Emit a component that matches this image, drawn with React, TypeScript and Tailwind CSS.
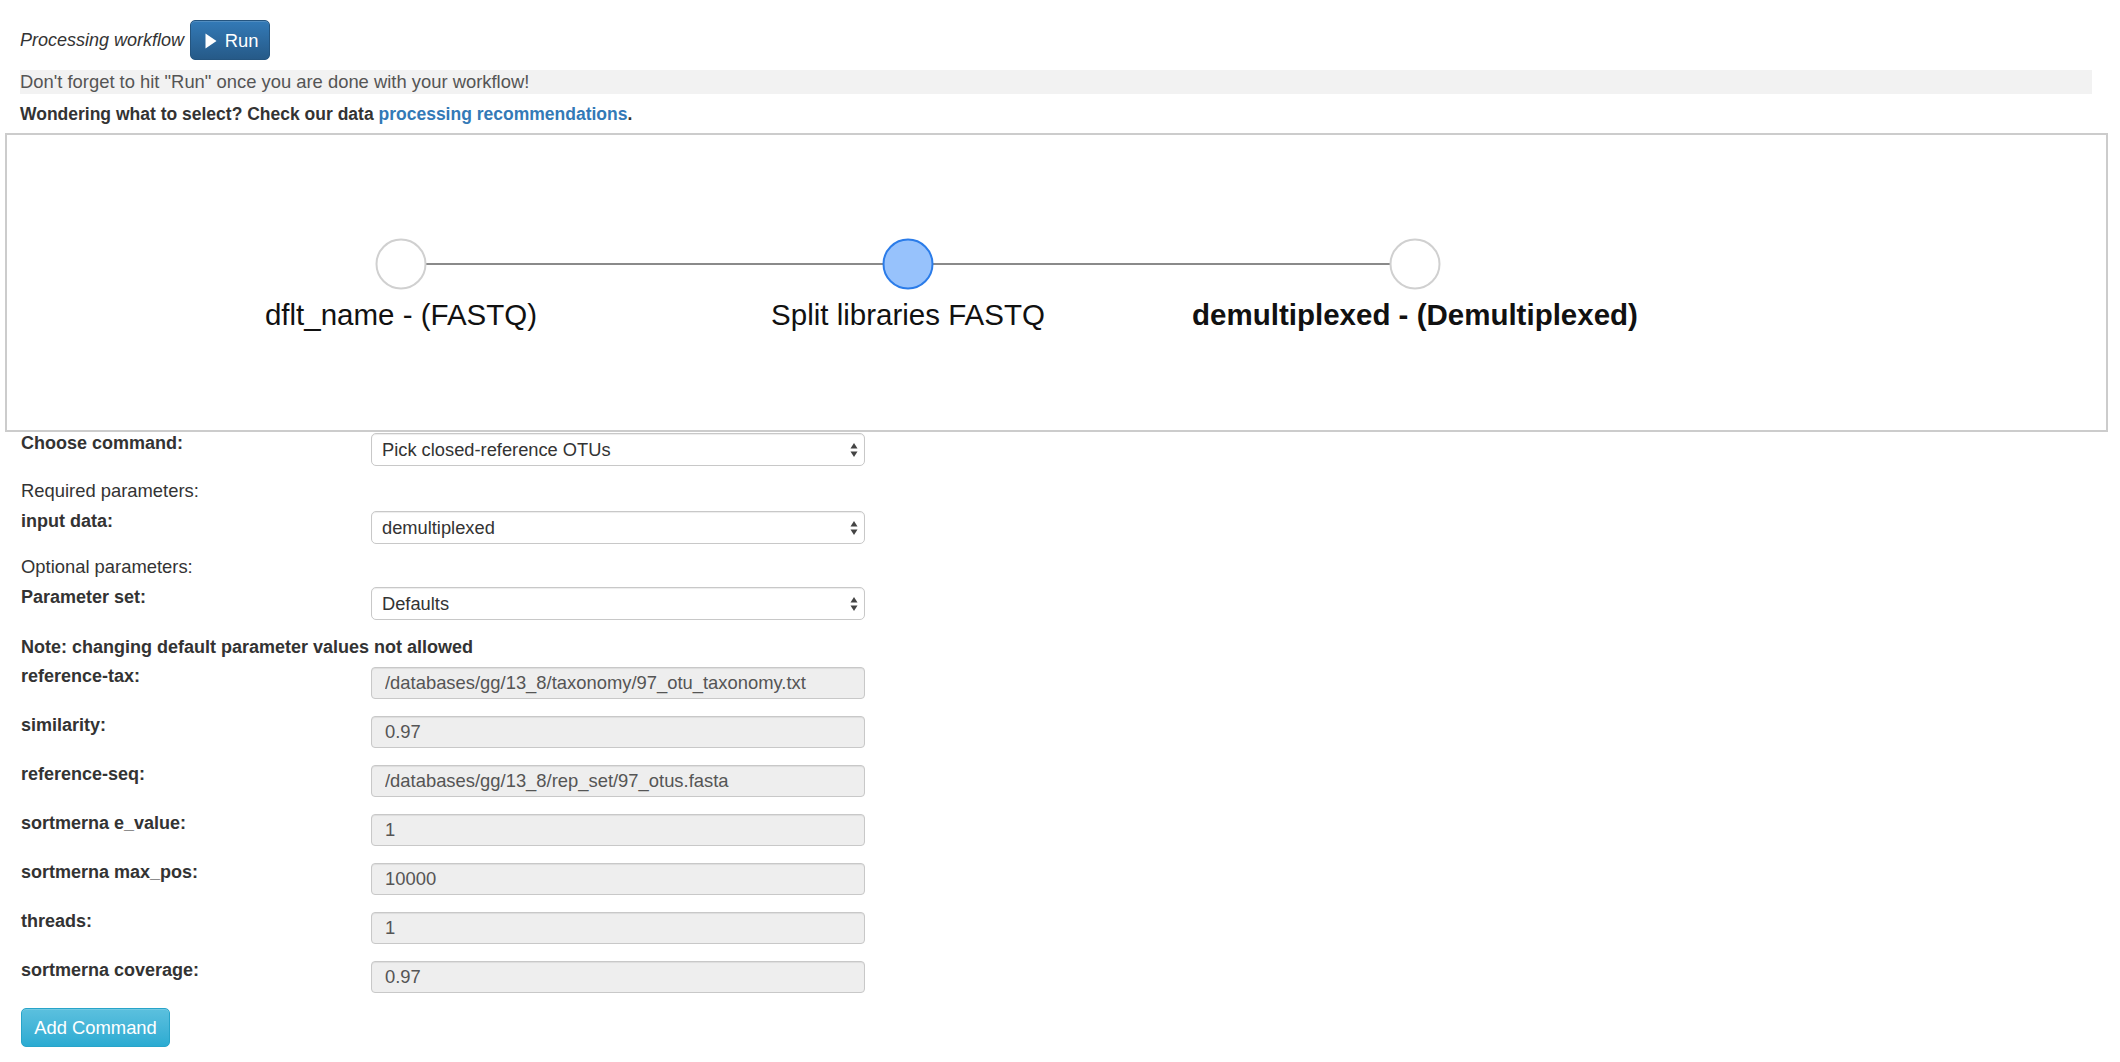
import React from "react";

const paramRows: { label: string; value: string }[] = [
  { label: "reference-tax:", value: "/databases/gg/13_8/taxonomy/97_otu_taxonomy.txt" },
  { label: "similarity:", value: "0.97" },
  { label: "reference-seq:", value: "/databases/gg/13_8/rep_set/97_otus.fasta" },
  { label: "sortmerna e_value:", value: "1" },
  { label: "sortmerna max_pos:", value: "10000" },
  { label: "threads:", value: "1" },
  { label: "sortmerna coverage:", value: "0.97" },
];

function SelectBox({ value }: { value: string }) {
  return (
    <div className="relative flex h-[33px] w-[494px] items-center rounded-[5px] border border-[#c8c8c8] bg-white pl-[10px] text-[18.3px] text-[#333] shadow-[inset_0_1px_1px_rgba(0,0,0,0.075)]">
      {value}
      {/* mac style up/down arrows */}
      <svg className="absolute right-[5px] top-[8px]" width="10" height="16" viewBox="0 0 10 16">
        <path d="M5 1 L8.5 6.5 L1.5 6.5 Z" fill="#444" />
        <path d="M5 15 L8.5 9.5 L1.5 9.5 Z" fill="#444" />
      </svg>
    </div>
  );
}

function SelectRow({ label, value, className }: { label: string; value: string; className: string }) {
  return (
    <div className={`flex items-start ${className}`}>
      <div className="-mt-[2px] w-[350px] text-[18px] font-bold leading-[24px] text-[#333]">{label}</div>
      <SelectBox value={value} />
    </div>
  );
}

function ParamRow({ label, value, first }: { label: string; value: string; first?: boolean }) {
  return (
    <div className={`flex items-start ${first ? "mt-[8px]" : "mt-[17px]"}`}>
      <div className="-mt-[3px] w-[350px] text-[18px] font-bold leading-[24px] text-[#333]">{label}</div>
      <input
        readOnly
        value={value}
        className="h-[32px] w-[494px] rounded-[4px] border border-[#c8c8c8] bg-[#eee] pl-[13px] text-[18.4px] text-[#555] shadow-[inset_0_1px_1px_rgba(0,0,0,0.075)] outline-none"
      />
    </div>
  );
}

function WorkflowGraph() {
  const nodes = [
    { x: 394, label: "dflt_name - (FASTQ)", active: false, bold: false },
    { x: 901, label: "Split libraries FASTQ", active: true, bold: false },
    { x: 1408, label: "demultiplexed - (Demultiplexed)", active: false, bold: true },
  ];
  return (
    <svg className="block h-full w-full">
      <line x1={394} y1={129} x2={901} y2={129} stroke="#8a8a8a" strokeWidth={2} />
      <line x1={901} y1={129} x2={1408} y2={129} stroke="#8a8a8a" strokeWidth={2} />
      {nodes.map((n) => (
        <g key={n.label}>
          <circle
            cx={n.x}
            cy={129}
            r={24.5}
            fill={n.active ? "#97c2fc" : "#ffffff"}
            stroke={n.active ? "#2b7ce9" : "#d0d0d0"}
            strokeWidth={2}
          />
          <text
            x={n.x}
            y={190}
            textAnchor="middle"
            fontSize="29.5"
            fontWeight={n.bold ? 700 : 400}
            fill="#111"
            fontFamily="'Liberation Sans', Arial, sans-serif"
          >
            {n.label}
          </text>
        </g>
      ))}
    </svg>
  );
}

export default function App() {
  return (
    <div className="min-h-screen bg-white pl-[5px] pr-[12px] pb-[15px] font-['Liberation_Sans',Arial,sans-serif] text-[#333]">
      {/* header row */}
      <div className="ml-[15px] mt-[20px] flex h-[40px] items-center">
        <span className="text-[18px] italic text-[#333]">Processing workflow</span>
        <button className="ml-[6px] flex h-[40px] w-[80px] items-center justify-center gap-[8px] rounded-[5px] border border-[#245580] bg-linear-to-b from-[#337ab7] to-[#265a88] pt-[4px] text-[18.4px] text-white shadow-[inset_0_1px_0_rgba(255,255,255,0.15)]">
          <svg className="ml-[3px] -mt-[2px]" width="12" height="16" viewBox="0 0 12 16">
            <path d="M0.5 0.5 L11.5 8 L0.5 15.5 Z" fill="#fff" />
          </svg>
          <span className="-mt-[2px]">Run</span>
        </button>
      </div>

      <div className="ml-[15px] mr-[16px] mt-[10px] h-[24px] bg-[#f2f2f2] text-[18.4px] leading-[24px] text-[#555]">
        Don't forget to hit "Run" once you are done with your workflow!
      </div>

      <div className="ml-[15px] mt-[8px] text-[17.5px] font-bold leading-[24px] text-[#333]">
        Wondering what to select? Check our data{" "}
        <a className="text-[#337ab7]">processing recommendations</a>.
      </div>

      <div className="mt-[7px] h-[299px] border-2 border-[#cccccc] bg-white">
        <WorkflowGraph />
      </div>

      <div className="ml-[16px]">
        <SelectRow className="mt-[1px]" label="Choose command:" value="Pick closed-reference OTUs" />

        <div className="mt-[13px] text-[18.4px] leading-[24px] text-[#333]">Required parameters:</div>
        <SelectRow className="mt-[8px]" label="input data:" value="demultiplexed" />

        <div className="mt-[11px] text-[18.4px] leading-[24px] text-[#333]">Optional parameters:</div>
        <SelectRow className="mt-[8px]" label="Parameter set:" value="Defaults" />

        <div className="mt-[15px] text-[18px] font-bold leading-[24px] text-[#333]">
          Note: changing default parameter values not allowed
        </div>

        {paramRows.map((r, i) => (
          <ParamRow key={r.label} label={r.label} value={r.value} first={i === 0} />
        ))}

        <button className="mt-[15px] h-[39px] w-[149px] rounded-[5px] border border-[#28a4c9] bg-linear-to-b from-[#5bc0de] to-[#2aabd2] text-[18.4px] text-white shadow-[inset_0_1px_0_rgba(255,255,255,0.15)]">
          Add Command
        </button>
      </div>
    </div>
  );
}
